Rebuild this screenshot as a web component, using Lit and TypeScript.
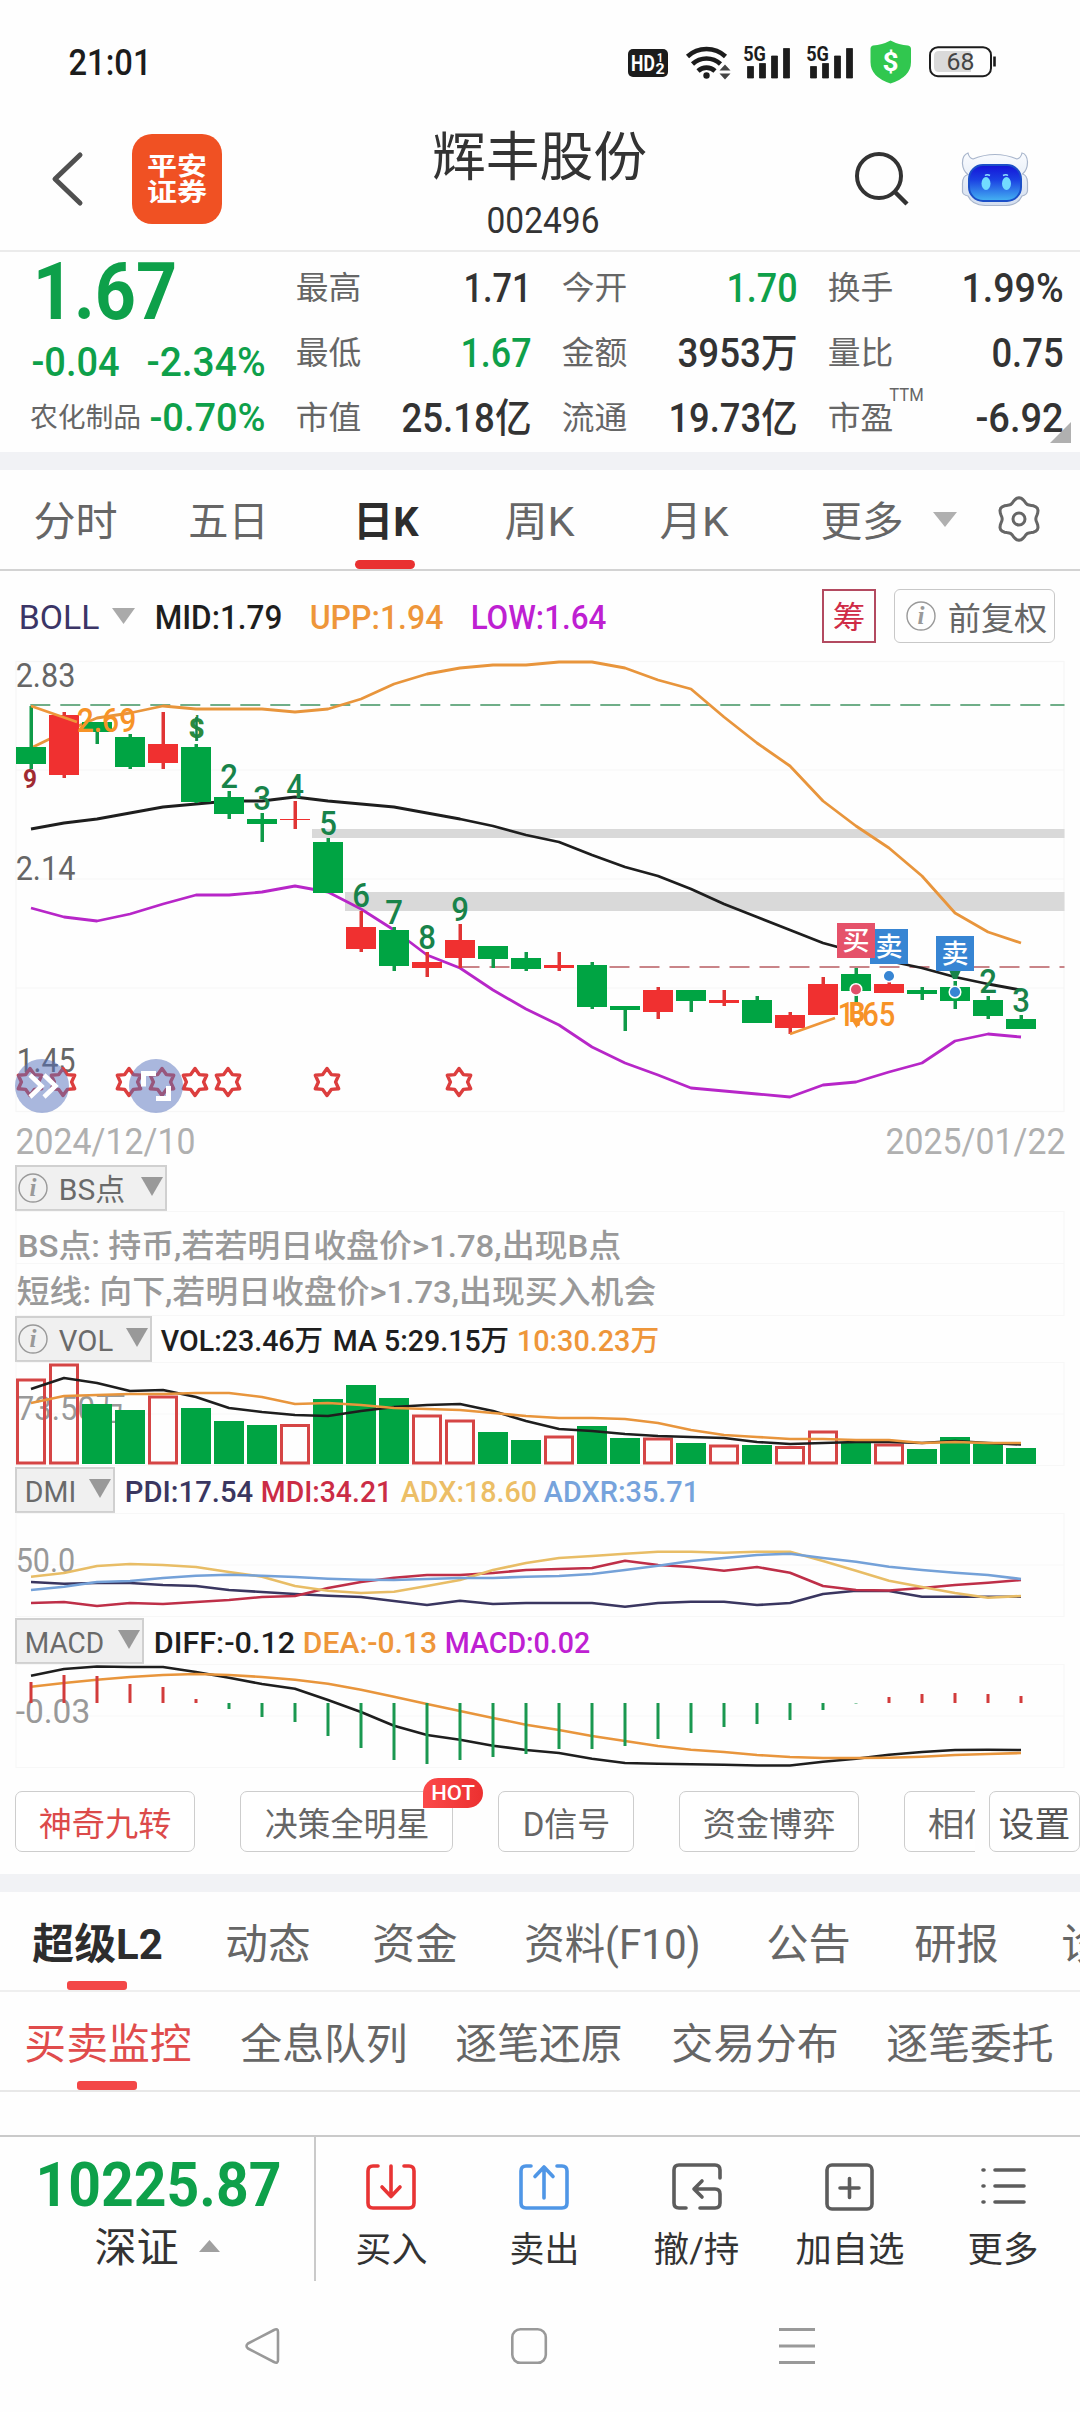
import { LitElement, html, svg, css, nothing } from "lit";
import { customElement, property } from "lit/decorators.js";

const GREEN = "#00a443";
const RED = "#f03030";

const STEP = 33;
const X0 = 31;
const cx = (i: number) => X0 + STEP * i;
const poly = (ys: number[]) => ys.map((y, i) => `${cx(i)},${y}`).join(" ");

/* One line of text set to an exact ink width; the box is as tall as a capital letter. */
const fit = (text: string, w: number, size: number, cls = "") => {
  const h = Math.round(size * 0.711);
  return html`<svg class="fit ${cls}" width=${w} height=${h}>
    <text x=${-size * 0.04} y=${h} font-size=${size} textLength=${w + size * 0.08} lengthAdjust="spacingAndGlyphs">${text}</text>
  </svg>`;
};

const label = (text: string, x: number, y: number, w: number, size: number, cls: string) =>
  svg`<text class=${cls} x=${x - size * 0.04} y=${y} font-size=${size} textLength=${w + size * 0.08} lengthAdjust="spacingAndGlyphs">${text}</text>`;

const sharedText = css`
  * { box-sizing: border-box; }
  :host { display: block; font-family: Roboto, "Noto Sans CJK SC", sans-serif; color: #333; }
  svg { display: block; flex: none; overflow: visible; }
  text { white-space: pre; fill: currentColor; }
  .m { font-weight: 500; }
  .b { font-weight: 700; }
  .green { color: #0ea04a; }
  .gray { color: #666; }
  .row { display: flex; align-items: center; }
`;

const infoIcon = html`<svg width="30" height="30" viewBox="0 0 30 30">
  <circle cx="15" cy="15" r="14" fill="none" stroke="#999" stroke-width="1.4"></circle>
  <text x="15" y="23" text-anchor="middle" font-family="Liberation Serif, serif" font-style="italic" font-weight="700" font-size="25" style="fill:#999">i</text>
</svg>`;

const triangle = (w: number, h: number, color: string) =>
  html`<svg width=${w} height=${h} viewBox="0 0 10 10" preserveAspectRatio="none"><path d="M0 0H10L5 10Z" fill=${color}></path></svg>`;

@customElement("status-bar")
class StatusBar extends LitElement {
  static styles = [sharedText, css`
    .bar { height: 120px; padding: 4px 84px 0 70px; display: flex; align-items: center; justify-content: space-between; color: #1c1c1c; }
    .icons { display: flex; align-items: center; }
    .hd { margin-right: 18px; margin-top: 2px; }
    .wifi { margin-right: 13px; }
    .sig { margin-right: 16px; }
    .shield { margin: 0 18px 0 1px; }
    .white { fill: #fff; }
    .dark { fill: #444; }
  `];
  signal() {
    return html`<svg class="sig" width="47" height="33" viewBox="743 45 47 33">
      ${label("5G", 744, 60, 21, 21, "b")}
      <path d="M747.5 65.500H753.5V77H747.5ZM759.5 62.500H765.5V77H759.5ZM771.5 55H777.5V77H771.5ZM783.5 47.500H789.5V77H783.5Z" fill="#1c1c1c" stroke="#1c1c1c" stroke-width=".8" stroke-linejoin="round"></path>
    </svg>`;
  }
  render() {
    return html`<div class="bar">
      ${fit("21:01", 80, 37, "m")}
      <div class="icons">
        <svg class="hd" width="40" height="28" viewBox="628 49 40 28">
          <rect x="628" y="49" width="40" height="28" rx="5" fill="#1c1c1c"></rect>
          ${label("HD", 632, 71, 22, 22, "b white")}
          ${label("1", 657.5, 61.5, 5, 13, "b white")}
          ${label("2", 656, 73.5, 8, 15, "b white")}
        </svg>
        <svg class="wifi" width="44" height="34" viewBox="686 44 44 34">
          <g fill="none" stroke="#1c1c1c" stroke-width="4.6">
            <path d="M687.5 55.5A28 28 0 0 1 725.5 55.5"></path>
            <path d="M692.5 63A20.5 20.5 0 0 1 720.5 63"></path>
            <path d="M698 70A12.5 12.5 0 0 1 715 70"></path>
          </g>
          <circle cx="706.5" cy="74.5" r="3.2" fill="#1c1c1c"></circle>
          <path d="M719.5 69.5L725 63.5L730.5 69.5ZM719.5 72.5H730.5L725 78.5Z" fill="#444"></path>
        </svg>
        ${this.signal()}${this.signal()}
        <svg class="shield" width="41" height="44" viewBox="870 40 41 44">
          <path d="M890.5 40.5Q899 45 908 45.5Q911 46 911 49V62Q911 77 890.5 83.5Q870.5 77 870.5 62V49Q870.5 46 873 45.5Q882 45 890.5 40.5Z" fill="#31c74f"></path>
          ${label("$", 883.5, 71, 14, 26, "b white")}
        </svg>
        <svg width="67" height="32" viewBox="929 47 67 32">
          <rect x="930" y="48.2" width="61" height="29" rx="8" fill="none" stroke="#1c1c1c" stroke-width="2"></rect>
          <path d="M971 52H939Q934 52 934 57V68Q934 73 939 73H971Z" fill="#dadada"></path>
          <path d="M994.5 57.5V67.5" stroke="#1c1c1c" stroke-width="2.6"></path>
          ${label("68", 947.5, 71, 26, 24, "dark")}
        </svg>
      </div>
    </div>`;
  }
}

@customElement("stock-header")
class StockHeader extends LitElement {
  static styles = [sharedText, css`
    .head { height: 132px; border-bottom: 2px solid #ebebeb; display: grid; grid-template-columns: 132px 90px 634px 106px 118px; align-items: center; padding-bottom: 13px; }
    .back { margin-left: 52px; }
    .logo { width: 90px; height: 90px; border-radius: 20px; background: #f05123; color: #fff; display: flex; flex-direction: column; align-items: center; justify-content: center; gap: 8px; }
    .title { width: 634px; display: flex; flex-direction: column; align-items: center; gap: 31px; padding: 13px 0 0 1px; }
    .title .fit:last-child { margin-left: 6px; }
  `];
  render() {
    return html`<div class="head">
      <svg class="back" width="30" height="52" viewBox="52 153 30 52"><path d="M80 155L55 179L80 203" fill="none" stroke="#505050" stroke-width="5" stroke-linecap="round" stroke-linejoin="round"></path></svg>
      <div class="logo">${fit("平安", 58, 25.5, "b")}${fit("证券", 58, 25.5, "b")}</div>
      <div class="title">${fit("辉丰股份", 211, 53)}${fit("002496", 110, 37)}</div>
      <svg width="54" height="54" viewBox="856 152 54 54"><circle cx="879" cy="176" r="22" fill="none" stroke="#333" stroke-width="4"></circle><path d="M895 192L907 204" stroke="#333" stroke-width="4.5"></path></svg>
      <svg width="66" height="54" viewBox="962 152 66 54">
        <defs>
          <linearGradient id="face" x1="0" y1="0" x2="0" y2="1"><stop offset="0" stop-color="#1512d8"></stop><stop offset=".4" stop-color="#1a3fe2"></stop><stop offset="1" stop-color="#45b4f2"></stop></linearGradient>
          <linearGradient id="shell" x1="0" y1="0" x2="0" y2="1"><stop offset="0" stop-color="#fafcff"></stop><stop offset="1" stop-color="#d3deef"></stop></linearGradient>
        </defs>
        <path d="M968 153Q962 155 962.5 164Q963 171 968 174.5Q962 176 962.5 185V192Q963 195 968 196Q972 205 985 205.5H1006Q1018 205 1022 196Q1027 195 1027.5 191V182Q1027 175 1022.5 174Q1027.5 170 1027.5 162Q1027 154 1022 153Q1021 158 1017 159Q1006 154.5 995 154.5T973 159Q969 158 968 153Z" fill="url(#shell)" stroke="#a9b6cc" stroke-width="1.2"></path>
        <rect x="969" y="165" width="52" height="36" rx="14" fill="url(#face)" stroke="#1b4fc8" stroke-width="2"></rect>
        <ellipse cx="986" cy="183.5" rx="4.5" ry="6.5" fill="#72dcff"></ellipse>
        <ellipse cx="1006.5" cy="183.5" rx="4.5" ry="6.5" fill="#72dcff"></ellipse>
        <path d="M985 175.5Q987 174 990 175.5M1003 175.5Q1006 174 1008 175.5" stroke="#8ee3ff" stroke-width="1.5" fill="none"></path>
      </svg>
    </div>`;
  }
}

@customElement("quote-panel")
class QuotePanel extends LitElement {
  static styles = [sharedText, css`
    .quote { height: 200px; display: grid; grid-template-columns: 297px 766px; position: relative; }
    .r1 { height: 78px; padding-left: 36px; }
    .r2 { height: 63px; padding-left: 33px; gap: 30px; }
    .r3 { height: 48px; padding-left: 31px; gap: 11px; }
    .grid { display: grid; grid-template-columns: repeat(3, 234px); column-gap: 32px; grid-auto-rows: 65px; padding-top: 3px; }
    .cell { display: flex; align-items: center; justify-content: space-between; }
    .cell .fit:last-child { margin-right: 1px; }
    .sup { align-self: flex-start; margin: 3px auto 0 -2px; }
    .corner { position: absolute; left: 1050px; top: 170px; }
  `];
  render() {
    const cells: [string, string, number, string][] = [
      ["最高", "1.71", 65, ""], ["今开", "1.70", 68, "green"], ["换手", "1.99%", 99, ""],
      ["最低", "1.67", 68, "green"], ["金额", "3953万", 117, ""], ["量比", "0.75", 69, ""],
      ["市值", "25.18亿", 127, ""], ["流通", "19.73亿", 126, ""], ["市盈", "-6.92", 85, ""],
    ];
    return html`<div class="quote">
      <div class="left">
        <div class="row r1">${fit("1.67", 138, 79, "b green")}</div>
        <div class="row r2">${fit("-0.04", 85, 40, "m green")}${fit("-2.34%", 116, 40, "m green")}</div>
        <div class="row r3">${fit("农化制品", 109, 27.5, "gray")}${fit("-0.70%", 113, 39, "m green")}</div>
      </div>
      <div class="grid">
        ${cells.map(([k, v, w, c]) => html`<div class="cell">
          ${fit(k, 63, 32, "gray")}
          ${k === "市盈" ? html`<span class="sup">${fit("TTM", 33, 18, "gray")}</span>` : nothing}
          ${fit(v, w, 40, "m " + c)}
        </div>`)}
      </div>
      <svg class="corner" width="21" height="21" viewBox="0 0 21 21"><path d="M21 0V21H0Z" fill="#b0b0b0"></path></svg>
    </div>`;
  }
}

@customElement("period-tabs")
class PeriodTabs extends LitElement {
  static styles = [sharedText, css`
    .tabs { height: 101px; border-bottom: 2px solid #d3d3d3; display: flex; align-items: center; padding-left: 35px; color: #666; }
    .tab { height: 99px; display: flex; align-items: center; position: relative; padding-top: 4px; }
    .on { color: #2d2d2d; }
    .on::after { content: ""; position: absolute; left: 0; bottom: 0; width: 60px; height: 9px; border-radius: 5px; background: #e93131; }
    .t2 { margin-left: 74px; } .t3 { margin-left: 88px; } .t4 { margin-left: 89px; } .t5 { margin-left: 88px; } .t6 { margin-left: 95px; }
    .tri { margin-left: 31px; } .gear { margin-left: 39px; margin-bottom: 2px; }
  `];
  render() {
    const tabs: [string, number][] = [["分时", 81], ["五日", 77], ["日K", 62], ["周K", 67], ["月K", 66], ["更多", 80]];
    const hex = Array.from({ length: 60 }, (_, i) => {
      const a = (i * Math.PI) / 30;
      const r = 19 - 2.2 * Math.cos(6 * a);
      return `${(23 + r * Math.cos(a)).toFixed(1)},${(23 + r * Math.sin(a)).toFixed(1)}`;
    }).join(" ");
    return html`<div class="tabs">
      ${tabs.map(([t, w], i) => html`<div class="tab t${i + 1} ${i === 2 ? "on b" : ""}">${fit(t, w, 41)}</div>`)}
      <span class="tri">${triangle(24, 15, "#b0b0b0")}</span>
      <svg class="gear" width="46" height="46" viewBox="0 0 46 46"><polygon points=${hex} fill="none" stroke="#666" stroke-width="3" stroke-linejoin="round"></polygon><circle cx="23" cy="23" r="6" fill="none" stroke="#666" stroke-width="3"></circle></svg>
    </div>`;
  }
}

type Candle = [string, number, number, number, number];
const CANDLES: Candle[] = [
  ["g", 747, 764, 706, 769], ["r", 715, 775, 712, 778], ["g", 722, 732, 722, 744], ["g", 737, 767, 734, 769],
  ["r", 744, 763, 712, 769], ["g", 747, 802, 744, 803], ["g", 797, 814, 791, 819], ["g", 819, 824, 813, 842],
  ["r", 819, 820, 801, 829], ["g", 842, 893, 838, 893], ["r", 927, 949, 911, 952], ["g", 930, 966, 927, 971],
  ["r", 962, 968, 952, 977], ["r", 940, 958, 924, 968], ["g", 946, 959, 946, 968], ["g", 958, 969, 952, 971],
  ["r", 965, 968, 952, 971], ["g", 965, 1007, 962, 1009], ["g", 1006, 1010, 1006, 1031], ["r", 990, 1012, 987, 1019],
  ["g", 990, 1001, 990, 1012], ["r", 1000, 1003, 990, 1006], ["g", 1000, 1023, 996, 1023], ["r", 1015, 1028, 1012, 1034],
  ["r", 984, 1015, 977, 1015], ["g", 974, 991, 968, 1005], ["r", 984, 993, 982, 993], ["g", 990, 994, 987, 1000],
  ["g", 987, 1001, 981, 1009], ["g", 1000, 1016, 996, 1019], ["g", 1019, 1029, 1015, 1029],
];
const UPP = [748, 732, 718, 713, 706, 709, 709, 709, 712, 709, 699, 684, 674, 668, 665, 665, 662, 662, 668, 680, 689, 717, 743, 766, 801, 826, 848, 876, 913, 932, 943];
const MID = [829, 823, 819, 813, 807, 804, 801, 801, 797, 801, 804, 807, 813, 819, 826, 835, 842, 855, 867, 876, 889, 904, 917, 930, 943, 952, 961, 968, 977, 984, 990];
const LOW = [908, 917, 921, 914, 904, 895, 895, 892, 886, 892, 909, 930, 955, 968, 990, 1009, 1025, 1047, 1063, 1075, 1088, 1091, 1094, 1097, 1085, 1082, 1072, 1063, 1041, 1034, 1037];
const COUNTS: [string, number, number][] = [["2", 6, 788], ["3", 7, 810], ["4", 8, 798], ["5", 9, 835], ["6", 10, 907], ["7", 11, 924], ["8", 12, 949], ["9", 13, 921], ["2", 29, 993], ["3", 30, 1012]];

const starPath = (x: number, y: number) => {
  const pts = Array.from({ length: 12 }, (_, i) => {
    const r = i % 2 ? 8.6 : 13.5;
    const a = (i * Math.PI) / 6 - Math.PI / 2;
    return `${(x + r * Math.cos(a)).toFixed(1)},${(y + r * Math.sin(a)).toFixed(1)}`;
  });
  return pts.join(" ");
};

@customElement("boll-chart")
class BollChart extends LitElement {
  static styles = [sharedText, css`
    .head { height: 90px; padding: 0 25px 0 20px; display: flex; align-items: center; }
    .head > .fit { margin-top: 2px; }
    .boll { color: #3b3566; }
    .tri { margin: 0 21px 0 14px; }
    .mid { color: #1e1e1e; }
    .upp { color: #ee963a; margin-left: 30px; }
    .low { color: #be20d2; margin-left: 30px; }
    .chip { margin-left: auto; width: 54px; height: 54px; border: 2px solid #b34a60; color: #cf2b46; display: flex; align-items: center; justify-content: center; padding-top: 2px; }
    .adj { margin-left: 18px; width: 161px; height: 54px; border: 1.5px solid #c8c8c8; border-radius: 6px; display: flex; align-items: center; justify-content: space-between; padding: 0 8px 0 11px; }
    .adj .fit { margin-top: 4px; }
    .axis { fill: #666; }
    .count { fill: #18834a; font-weight: 500; }
    .dollar { fill: #2b8a3f; font-weight: 900; }
    .nine { fill: #a02a32; font-weight: 700; }
    .tag { fill: #f79327; font-weight: 500; }
    .bold { font-weight: 900; }
    .white { fill: #fff; font-weight: 500; }
    .dates { height: 53px; padding: 5px 16px 0 17px; display: flex; align-items: center; justify-content: space-between; color: #b0b0b0; }
    .line { fill: none; stroke-width: 2.8; stroke-linejoin: round; }
  `];
  badge(t: string, x: number, y: number, c: string) {
    return svg`<rect x=${x} y=${y} width="38" height="35" fill=${c}></rect>${label(t, x + 6.5, y + 27, 25, 26, "white")}`;
  }
  render() {
    return html`
      <div class="head">
        ${fit("BOLL", 78, 33, "boll")}<span class="tri">${triangle(23, 16, "#aaa")}</span>
        ${fit("MID:1.79", 125, 34, "m mid")}${fit("UPP:1.94", 131, 34, "m upp")}${fit("LOW:1.64", 133, 34, "m low")}
        <div class="chip">${fit("筹", 30, 31)}</div>
        <div class="adj gray">${infoIcon}${fit("前复权", 97, 32)}</div>
      </div>
      <svg width="1080" height="451" viewBox="0 661 1080 451">
        <g stroke="#f6f6f6" stroke-width="1.2" fill="none">
          <rect x="16" y="661.5" width="1048" height="450"></rect>
          <path d="M16 770H1064M16 879H1064M16 988H1064"></path>
        </g>
        <rect x="312" y="829" width="752.5" height="9" fill="#d9d9d9"></rect>
        <rect x="345" y="892" width="719.5" height="19" fill="#d9d9d9"></rect>
        <path d="M30.3 705H1064.5" stroke="#6fae88" stroke-width="2" stroke-dasharray="20 10"></path>
        <path d="M459.5 967H1064.5" stroke="#c98488" stroke-width="2" stroke-dasharray="20 10"></path>
        ${label("2.83", 17, 687, 57, 34, "axis")}${label("2.14", 17, 880, 57, 34, "axis")}${label("1.45", 18, 1072, 56, 34, "axis")}
        <polyline class="line" points=${poly(UPP)} stroke="#e8953c"></polyline>
        <polyline class="line" points=${poly(MID)} stroke="#1e1e1e"></polyline>
        <polyline class="line" points=${poly(LOW)} stroke="#b726c8"></polyline>
        ${CANDLES.map(([k, t, b, wt, wb], i) => {
          const c = k === "g" ? GREEN : RED;
          return svg`<rect x=${cx(i) - 1.5} y=${wt} width="3.5" height=${wb - wt} fill=${k === "g" ? "#0f9a48" : "#e03434"}></rect><rect x=${cx(i) - 15} y=${t} width="30" height=${b - t} fill=${c}></rect>`;
        })}
        ${COUNTS.map(([t, i, y]) => label(t, cx(i) - 7.5, y, 15, 34, "count"))}
        ${label("$", cx(5) - 6.5, 738, 14, 27, "dollar")}
        <path d="M196.5 717V741" stroke="#18834a" stroke-width="2.5"></path>
        ${label("9", 24, 788, 12, 25, "nine")}
        <path class="line" d="M31 706L77 722M790 1034L835 1018" stroke="#ee963a"></path>
        ${label("2.69", 78, 732, 57, 34, "tag")}${label("1.65", 839, 1025.5, 55, 34, "tag")}${label("B", 850, 1022, 14, 27, "tag bold")}
        <path d="M851 1019H862L856.5 1028Z" fill="#f79327"></path>
        <path d="M949 970H961L957 979H953Z" fill="#18834a"></path>
        ${this.badge("卖", 870, 929, "#3785d3")}${this.badge("买", 837, 923, "#e5526a")}${this.badge("卖", 936, 936, "#3785d3")}
        <g stroke="#fff" stroke-width="1.5">
          <circle cx="856" cy="989.5" r="5.8" fill="#e0506a"></circle><circle cx="889" cy="976" r="5.8" fill="#3785d3"></circle><circle cx="955" cy="992" r="5.8" fill="#3785d3"></circle>
        </g>
        ${[30, 63, 129, 162, 195, 228, 327, 459].map((x) => svg`<polygon points=${starPath(x, 1082)} fill="#fff" stroke="#dc3e3e" stroke-width="3.4" stroke-linejoin="round"></polygon>`)}
        <circle cx="42" cy="1086" r="27" fill="#5370bc" fill-opacity=".5"></circle>
        <circle cx="156" cy="1086" r="27" fill="#5370bc" fill-opacity=".5"></circle>
        <g fill="none" stroke="#fff" stroke-width="4.5">
          <path d="M30 1075L41.5 1086L30 1097M44 1075L55.5 1086L44 1097"></path>
          <path d="M156 1080.500H143.5V1093.500" stroke-width="5" transform="translate(0 -7)"></path>
          <path d="M156 1098.500H168.5V1086" stroke-width="5"></path>
        </g>
      </svg>
      <div class="dates">${fit("2024/12/10", 177, 36)}${fit("2025/01/22", 177, 36)}</div>`;
  }
}

type Series = { color: string; ys: number[] };
const VOL_TOPS: [string, number][] = [
  ["r", 1379], ["r", 1364], ["g", 1404], ["g", 1410], ["r", 1396], ["g", 1408], ["g", 1421], ["g", 1425], ["r", 1424.5], ["g", 1399], ["g", 1385],
  ["g", 1398], ["r", 1415], ["r", 1420], ["g", 1432], ["g", 1440], ["r", 1436], ["g", 1426], ["g", 1438], ["r", 1438], ["g", 1443], ["r", 1445],
  ["g", 1445], ["r", 1446.5], ["r", 1431], ["g", 1443], ["r", 1444], ["g", 1449], ["g", 1437], ["g", 1444], ["g", 1448],
];
const MACD_ENDS = [1682, 1675, 1676, 1684, 1687, 1699, 1709, 1717, 1722, 1736, 1748, 1760, 1764, 1760, 1757, 1754, 1749, 1749, 1746, 1739, 1733, 1727, 1724, 1720, 1710, 1703.5, 1697, 1694, 1693, 1694, 1696];
const VOL_LINES: Series[] = [
  { color: "#1e1e1e", ys: [1389, 1378, 1383, 1391, 1390, 1397, 1408, 1412, 1415, 1416, 1411, 1407, 1405, 1404, 1411, 1421, 1429, 1431, 1434, 1436, 1437, 1438, 1442, 1444, 1443, 1442, 1442, 1443, 1441, 1443, 1444.5] },
  { color: "#e8953c", ys: [1403, 1396, 1395, 1394, 1394, 1393, 1393, 1397, 1404, 1403, 1405, 1408, 1409, 1410, 1413, 1416, 1418, 1418, 1419, 1423, 1430, 1435, 1437, 1439, 1439, 1440, 1440, 1443, 1442, 1443, 1443] },
];
const DMI_LINES: Series[] = [
  { color: "#3a3660", ys: [1582, 1583.7, 1583, 1583, 1585, 1586, 1590, 1592, 1594, 1595.7, 1597, 1601, 1605, 1600.7, 1604, 1603, 1603, 1603, 1606.7, 1603, 1601.7, 1601.7, 1605, 1603, 1594, 1590.7, 1591, 1596.7, 1596.7, 1596.7, 1596.7] },
  { color: "#be2f48", ys: [1603, 1602, 1606, 1603, 1604, 1602, 1600, 1597, 1596, 1588, 1582, 1577.7, 1575, 1575, 1573, 1570, 1569, 1568, 1560.7, 1565, 1567, 1570.7, 1567, 1572.7, 1586, 1590, 1590.5, 1588, 1585, 1582.7, 1580] },
  { color: "#e8bd66", ys: [1576.7, 1573, 1566, 1564, 1565, 1567, 1572, 1576.7, 1586, 1590.7, 1593, 1591.7, 1586, 1580, 1570, 1563, 1558, 1556, 1553.7, 1551.7, 1551.7, 1552.7, 1551.7, 1551.7, 1561, 1570.7, 1580.7, 1587, 1593, 1597.7, 1596] },
  { color: "#74a1d8", ys: [1590, 1586.7, 1582, 1581, 1578, 1575.7, 1574.7, 1575.7, 1577, 1578.7, 1579.7, 1580, 1579, 1578, 1578, 1576.7, 1576, 1574, 1570, 1565.7, 1561, 1558, 1555, 1553.7, 1558, 1561.7, 1566.7, 1570, 1572.7, 1575, 1579] },
];
const MACD_LINES: Series[] = [
  { color: "#1e1e1e", ys: [1675.7, 1669, 1666.5, 1667, 1667, 1672, 1677.7, 1684, 1688.7, 1700, 1712, 1725.7, 1735, 1739.7, 1745.7, 1750, 1753, 1758.7, 1763, 1763.7, 1764.3, 1764.7, 1765.5, 1765.5, 1761.7, 1758.7, 1754.7, 1752, 1750, 1749.7, 1750] },
  { color: "#e8953c", ys: [1686.7, 1683, 1679.7, 1677, 1675, 1674, 1675, 1677, 1679.7, 1683.7, 1689.7, 1696.7, 1704, 1711, 1718, 1724.7, 1730, 1736, 1741, 1746, 1749.7, 1752, 1755, 1757, 1758, 1758, 1757.7, 1756.7, 1755, 1754, 1753] },
];

@customElement("sub-chart")
class SubChart extends LitElement {
  @property() name = "";
  @property({ type: Number }) nameWidth = 50;
  @property({ type: Number }) boxWidth = 100;
  @property({ type: Boolean }) info = false;
  @property({ attribute: false }) values: [string, number, string, number][] = [];
  @property({ attribute: false }) body: unknown = nothing;

  static styles = [sharedText, css`
    .head { height: 46px; padding-left: 15px; display: flex; align-items: center; }
    .name { height: 46px; border: 2px solid #d0d0d0; background: #f0f0f0; display: flex; align-items: center; padding: 0 2px 0 9px; color: #6a6a6a; }
    .name.info { padding-left: 1px; }
    .name.info .fit { margin-left: 12px; }
    .name .fit { margin-top: 2px; }
    .tri { margin: 0 0 3px auto; }
    .black { color: #1e1e1e; } .orange { color: #ee963a; } .navy { color: #3a3660; } .crimson { color: #cb2c45; }
    .sand { color: #ecbe66; } .sky { color: #76a3dc; } .violet { color: #be20d2; }
    .val { padding-top: 3px; }
    .axis { fill: #999; }
    .note { fill: #999; font-weight: 500; }
    .line { fill: none; stroke-width: 2.6; stroke-linejoin: round; }
  `];
  render() {
    return html`<div class="head">
        <div class="name ${this.info ? "info" : ""}" style="width:${this.boxWidth}px">
          ${this.info ? infoIcon : nothing}${fit(this.name, this.nameWidth, 30)}<span class="tri">${triangle(22, 19, "#999")}</span>
        </div>
        ${this.values.map(([t, w, c, gap]) => html`<div class="val" style="margin-left:${gap}px">${fit(t, w, 29, "m " + c)}</div>`)}
      </div>
      ${this.body}`;
  }
}

const frame = (top: number, h: number) => svg`<g stroke="#f7f7f7" stroke-width="1.2" fill="none"><rect x="16" y=${top + 0.5} width="1048" height=${h - 1}></rect><path d=${`M16 ${top + h / 2}H1064`}></path></g>`;
const lines = (s: Series[]) => s.map((l) => svg`<polyline class="line" points=${poly(l.ys)} stroke=${l.color}></polyline>`);

const bsBody = html`<svg width="1080" height="105" viewBox="0 1211 1080 105">
  ${frame(1211, 105)}
  ${label("BS点: 持币,若若明日收盘价>1.78,出现B点", 19, 1257, 601, 32, "note")}
  ${label("短线: 向下,若明日收盘价>1.73,出现买入机会", 18, 1303, 637, 32, "note")}
</svg>`;
const volBody = html`<svg width="1080" height="105" viewBox="0 1362 1080 105">
  ${frame(1362, 104)}${label("73.50万", 18, 1420, 107, 33, "axis")}
  ${VOL_TOPS.map(([k, t], i) => k === "g"
    ? svg`<rect x=${cx(i) - 15} y=${t} width="30" height=${1464 - t} fill=${GREEN}></rect>`
    : svg`<rect x=${cx(i) - 13.5} y=${t + 1} width="27" height=${1462 - t} fill="none" stroke="#d54545" stroke-width="3"></rect>`)}
  ${lines(VOL_LINES)}
</svg>`;
const dmiBody = html`<svg width="1080" height="105" viewBox="0 1513 1080 105">${frame(1513, 104)}${label("50.0", 17, 1572, 57, 33, "axis")}${lines(DMI_LINES)}</svg>`;
const macdBody = html`<svg width="1080" height="105" viewBox="0 1664 1080 105">
  ${frame(1664, 104)}${label("-0.03", 17, 1723, 72, 33, "axis")}${lines(MACD_LINES)}
  ${MACD_ENDS.map((y, i) => svg`<rect x=${cx(i) - 1.5} y=${Math.min(y, 1703)} width="3" height=${Math.abs(y - 1703)} fill=${y < 1703 ? "#d23b3b" : "#1a9850"}></rect>`)}
</svg>`;

@customElement("indicator-chips")
class IndicatorChips extends LitElement {
  static styles = [sharedText, css`
    .wrap { height: 105px; padding: 22px 0 0 15px; display: flex; gap: 14px; overflow: hidden; }
    .strip { width: 961px; height: 83px; display: flex; gap: 45px; margin-top: -22px; padding-top: 22px; overflow: hidden; }
    .chip { flex: none; height: 61px; border: 1.5px solid #cdcdcd; border-radius: 7px; display: flex; align-items: center; justify-content: center; position: relative; padding-top: 5px; background: #fff; color: #666; }
    .c0 { width: 180px; color: #dc4a4a; } .c1 { width: 213px; } .c2 { width: 136px; } .c3 { width: 180px; } .c4 { width: 180px; }
    .set { width: 91px; color: #555; }
    .hot { position: absolute; right: -31px; top: -14px; width: 60px; height: 30px; border-radius: 15px 15px 15px 0; background: linear-gradient(90deg, #fb4a4a, #ec3030); color: #fff; display: flex; align-items: center; justify-content: center; }
  `];
  render() {
    const chips: [string, number][] = [["神奇九转", 130], ["决策全明星", 162], ["D信号", 85], ["资金博弈", 130], ["相似K线", 130]];
    return html`<div class="wrap">
      <div class="strip">${chips.map(([t, w], i) => html`<div class="chip c${i}">${fit(t, w, 33)}${i === 1 ? html`<div class="hot">${fit("HOT", 42, 20, "m")}</div>` : nothing}</div>`)}</div>
      <div class="chip set">${fit("设置", 69, 35)}</div>
    </div>`;
  }
}

@customElement("section-tabs")
class SectionTabs extends LitElement {
  static styles = [sharedText, css`
    .tabs { height: 100px; border-bottom: 2px solid #efefef; display: flex; align-items: center; overflow: hidden; color: #666; }
    .tab { flex: none; height: 98px; display: flex; align-items: center; justify-content: center; position: relative; padding-top: 5px; }
    .on::after { content: ""; position: absolute; left: calc(50% - 31px); bottom: 0; width: 60px; height: 9px; border-radius: 3px; background: #f34747; }
    .dark { color: #2d2d2d; }
    .red { color: #e04c4c; }
    .first { padding-left: 34px; }
    .second { padding-left: 26px; gap: 51.5px; border-color: #e8e8e8; }
    .g0 { margin-right: 66px; } .g1 { margin-right: 65px; } .g2 { margin-right: 70px; } .g3 { margin-right: 69px; } .g4 { margin-right: 67px; } .g5 { margin-right: 66px; }
  `];
  render() {
    const a: [string, number][] = [["超级L2", 127], ["动态", 82], ["资金", 82], ["资料(F10)", 173], ["公告", 81], ["研报", 81], ["诊股", 81]];
    const b = ["买卖监控", "全息队列", "逐笔还原", "交易分布", "逐笔委托"];
    return html`
      <div class="tabs first">${a.map(([t, w], i) => html`<div class="tab g${i} ${i ? "" : "on b dark"}">${fit(t, w, 42)}</div>`)}</div>
      <div class="tabs second">${b.map((t, i) => html`<div class="tab ${i ? "" : "on red"}">${fit(t, 164, 42)}</div>`)}</div>`;
  }
}

@customElement("trade-bar")
class TradeBar extends LitElement {
  static styles = [sharedText, css`
    .bar { height: 146px; border-top: 2px solid #cacaca; display: grid; grid-template-columns: 316px repeat(5, 152.8px); }
    .index { border-right: 2px solid #cacaca; display: flex; flex-direction: column; }
    .num { margin: 26px 0 0 38px; }
    .mkt { display: flex; align-items: center; gap: 22px; margin: 27px 0 0 96px; }
    .mkt svg:last-child { margin-bottom: 4px; }
    .item { display: flex; flex-direction: column; align-items: center; padding: 25px 2px 0 0; gap: 25px; }
  `];
  render() {
    const s = (c: string, body: unknown) => html`<svg width="50" height="50" viewBox="0 0 50 50" fill="none" stroke=${c} stroke-width="3.6" stroke-linecap="round" stroke-linejoin="round">${body}</svg>`;
    const items: [string, number, unknown][] = [
      ["买入", 69, s("#e83434", svg`<path d="M12 4H7Q2 4 2 9V41Q2 46 7 46H43Q48 46 48 41V9Q48 4 43 4H38M25 4V34M16 25L25 34.5L34 25"></path>`)],
      ["卖出", 67, s("#4f96e6", svg`<path d="M12 4H7Q2 4 2 9V41Q2 46 7 46H43Q48 46 48 41V9Q48 4 43 4H38M25 36V6M16 14.5L25 5L34 14.5"></path>`)],
      ["撤/持", 83, s("#5c5c5c", svg`<path d="M48 16V8Q48 3 43 3H7Q2 3 2 8V41Q2 46 7 46H14M30 19L22 27L30 35M22 27H43Q48 27 48 32V41Q48 46 43 46H28"></path>`)],
      ["加自选", 106, s("#5c5c5c", svg`<rect x="2" y="3" width="45" height="44" rx="5"></rect><path d="M15 26H34M24.5 16.5V35.5"></path>`)],
      ["更多", 68, s("#5c5c5c", svg`<path d="M17 8H46M17 24H46M17 40H46M5 8H6M5 24H6M5 40H6"></path>`)],
    ];
    return html`<div class="bar">
      <div class="index">
        <div class="num">${fit("10225.87", 241, 61, "b green")}</div>
        <div class="mkt">${fit("深证", 81, 41)}<svg width="21" height="12" viewBox="0 0 21 12"><path d="M0 12L10.5 0L21 12Z" fill="#a0a0a0"></path></svg></div>
      </div>
      ${items.map(([t, w, icon]) => html`<div class="item">${icon}${fit(t, w, 35)}</div>`)}
    </div>`;
  }
}

@customElement("app-root")
class AppRoot extends LitElement {
  static styles = css`
    :host { display: block; width: 1080px; height: 2412px; background: #fefefe; overflow: hidden; }
    .sep { height: 18px; background: #f1f2f5; }
    .subs { display: flex; flex-direction: column; }
    .spacer { height: 43px; }
    .nav { height: 132px; display: grid; grid-template-columns: 34px 36px 36px; column-gap: 232px; padding-left: 245px; align-items: center; box-sizing: border-box; padding-bottom: 2px; }
    svg { display: block; overflow: visible; }
  `;
  render() {
    return html`
      <status-bar></status-bar>
      <stock-header></stock-header>
      <quote-panel></quote-panel>
      <div class="sep"></div>
      <period-tabs></period-tabs>
      <boll-chart></boll-chart>
      <div class="subs">
        <sub-chart name="BS点" nameWidth="64" boxWidth="152" info .body=${bsBody}></sub-chart>
        <sub-chart name="VOL" nameWidth="52" boxWidth="137" info .body=${volBody}
          .values=${[["VOL:23.46万", 160, "black", 10], ["MA 5:29.15万", 174, "black", 12], ["10:30.23万", 140, "orange", 10]]}></sub-chart>
        <sub-chart name="DMI" nameWidth="49" boxWidth="100" .body=${dmiBody}
          .values=${[["PDI:17.54", 126, "navy", 11], ["MDI:34.21", 129, "crimson", 10], ["ADX:18.60", 134, "sand", 11], ["ADXR:35.71", 153, "sky", 9]]}></sub-chart>
        <sub-chart name="MACD" nameWidth="77" boxWidth="129" .body=${macdBody}
          .values=${[["DIFF:-0.12", 139, "black", 11], ["DEA:-0.13", 132, "orange", 10], ["MACD:0.02", 143, "violet", 10]]}></sub-chart>
      </div>
      <indicator-chips></indicator-chips>
      <div class="sep"></div>
      <section-tabs></section-tabs>
      <div class="spacer"></div>
      <trade-bar></trade-bar>
      <div class="nav">
        <svg width="34" height="36" viewBox="0 0 34 36" fill="none" stroke="#999" stroke-width="2.6" stroke-linejoin="round"><path d="M29 2Q33 0 33 4V32Q33 36 29 34L3 20.5Q0 18 3 15.5Z"></path></svg>
        <svg width="36" height="36" viewBox="0 0 36 36" fill="none" stroke="#999" stroke-width="2.6"><rect x="1.3" y="1.3" width="33.5" height="33.5" rx="8"></rect></svg>
        <svg width="36" height="36" viewBox="0 0 36 36" stroke="#999" stroke-width="2.8"><path d="M0 1.5H36M0 18H36M0 34.5H36"></path></svg>
      </div>`;
  }
}
